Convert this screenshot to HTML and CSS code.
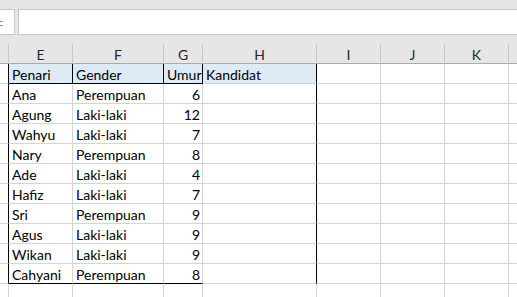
FILE: index.html
```html
<!DOCTYPE html>
<html>
<head>
<meta charset="utf-8">
<link rel="stylesheet" href="styles.css">
</head>
<body>
<div class="toolbar">
  <div class="namebox"><span class="arrow"></span></div>
  <div class="fx"></div>
</div>
<div class="sheet">
  <div class="ch rh"></div><div class="ch">E</div><div class="ch">F</div><div class="ch">G</div><div class="ch">H</div><div class="ch">I</div><div class="ch">J</div><div class="ch">K</div><div class="ch last"></div>

  <div class="c rb"></div><div class="c hd">Penari</div><div class="c hd">Gender</div><div class="c hd">Umur</div><div class="c hd open">Kandidat</div><div class="c"></div><div class="c"></div><div class="c"></div><div class="c last"></div>

  <div class="c rb"></div><div class="c">Ana</div><div class="c">Perempuan</div><div class="c n">6</div><div class="c eb"></div><div class="c"></div><div class="c"></div><div class="c"></div><div class="c last"></div>
  <div class="c rb"></div><div class="c">Agung</div><div class="c">Laki-laki</div><div class="c n">12</div><div class="c eb"></div><div class="c"></div><div class="c"></div><div class="c"></div><div class="c last"></div>
  <div class="c rb"></div><div class="c">Wahyu</div><div class="c">Laki-laki</div><div class="c n">7</div><div class="c eb"></div><div class="c"></div><div class="c"></div><div class="c"></div><div class="c last"></div>
  <div class="c rb"></div><div class="c">Nary</div><div class="c">Perempuan</div><div class="c n">8</div><div class="c eb"></div><div class="c"></div><div class="c"></div><div class="c"></div><div class="c last"></div>
  <div class="c rb"></div><div class="c">Ade</div><div class="c">Laki-laki</div><div class="c n">4</div><div class="c eb"></div><div class="c"></div><div class="c"></div><div class="c"></div><div class="c last"></div>
  <div class="c rb"></div><div class="c">Hafiz</div><div class="c">Laki-laki</div><div class="c n">7</div><div class="c eb"></div><div class="c"></div><div class="c"></div><div class="c"></div><div class="c last"></div>
  <div class="c rb"></div><div class="c">Sri</div><div class="c">Perempuan</div><div class="c n">9</div><div class="c eb"></div><div class="c"></div><div class="c"></div><div class="c"></div><div class="c last"></div>
  <div class="c rb"></div><div class="c">Agus</div><div class="c">Laki-laki</div><div class="c n">9</div><div class="c eb"></div><div class="c"></div><div class="c"></div><div class="c"></div><div class="c last"></div>
  <div class="c rb"></div><div class="c">Wikan</div><div class="c">Laki-laki</div><div class="c n">9</div><div class="c eb"></div><div class="c"></div><div class="c"></div><div class="c"></div><div class="c last"></div>
  <div class="c rb"></div><div class="c bb">Cahyani</div><div class="c bb">Perempuan</div><div class="c n bb">8</div><div class="c eb"></div><div class="c"></div><div class="c"></div><div class="c"></div><div class="c last"></div>

  <div class="c rh"></div><div class="c"></div><div class="c"></div><div class="c"></div><div class="c"></div><div class="c"></div><div class="c"></div><div class="c"></div><div class="c last"></div>
</div>
</body>
</html>
```

FILE: styles.css
```css
html, body {
  margin: 0;
  padding: 0;
  background: #ffffff;
  overflow: hidden;
}
body {
  width: 517px;
  height: 297px;
  font-family: Lato, "Liberation Sans", sans-serif;
  font-size: 14px;
  color: #000;
}
.toolbar {
  height: 44px;
  box-sizing: border-box;
  background: #e6e6e6;
  padding-top: 9px;
  display: flex;
  gap: 3px;
}
.namebox {
  width: 15px;
  height: 26px;
  box-sizing: border-box;
  background: #fff;
  border: 1px solid #c6c6c6;
  border-left: none;
  position: relative;
}
.arrow {
  position: absolute;
  left: 0;
  top: 11px;
  width: 3px;
  height: 3px;
  border-top: 1px solid #8a8a8a;
  border-bottom: 1px solid #8a8a8a;
}
.fx {
  flex: 1;
  height: 26px;
  box-sizing: border-box;
  background: #fff;
  border: 1px solid #c6c6c6;
  border-right: none;
}
.sheet {
  display: grid;
  grid-template-columns: 9px 64px 91px 39px 114px 64px 64px 64px 1fr;
  grid-template-rows: 20px;
  grid-auto-rows: 20px;
}
.ch {
  box-sizing: border-box;
  background: #e6e6e6;
  border-right: 1px solid #c8c8c8;
  border-bottom: 1px solid #ababab;
  text-align: center;
  color: #262626;
  line-height: 19px;
  padding-top: 1px;
}
.ch.last { border-right: none; }
.c {
  box-sizing: border-box;
  border-right: 1px solid #d4d4d4;
  border-bottom: 1px solid #d4d4d4;
  padding: 1px 3px 0 3px;
  line-height: 19px;
  white-space: nowrap;
  overflow: hidden;
}
.c.last { border-right: none; }
.c.rb { border-right-color: #000; }
.c.rh { border-bottom: none; }
.c.hd {
  background: #ddebf7;
  border-right-color: #000;
  border-bottom-color: #000;
}
.c.hd.open { border-bottom-color: #d4d4d4; }
.c.eb { border-right-color: #000; }
.c.bb { border-bottom-color: #000; }
.c.n {
  text-align: right;
  padding-right: 2px;
}
```
